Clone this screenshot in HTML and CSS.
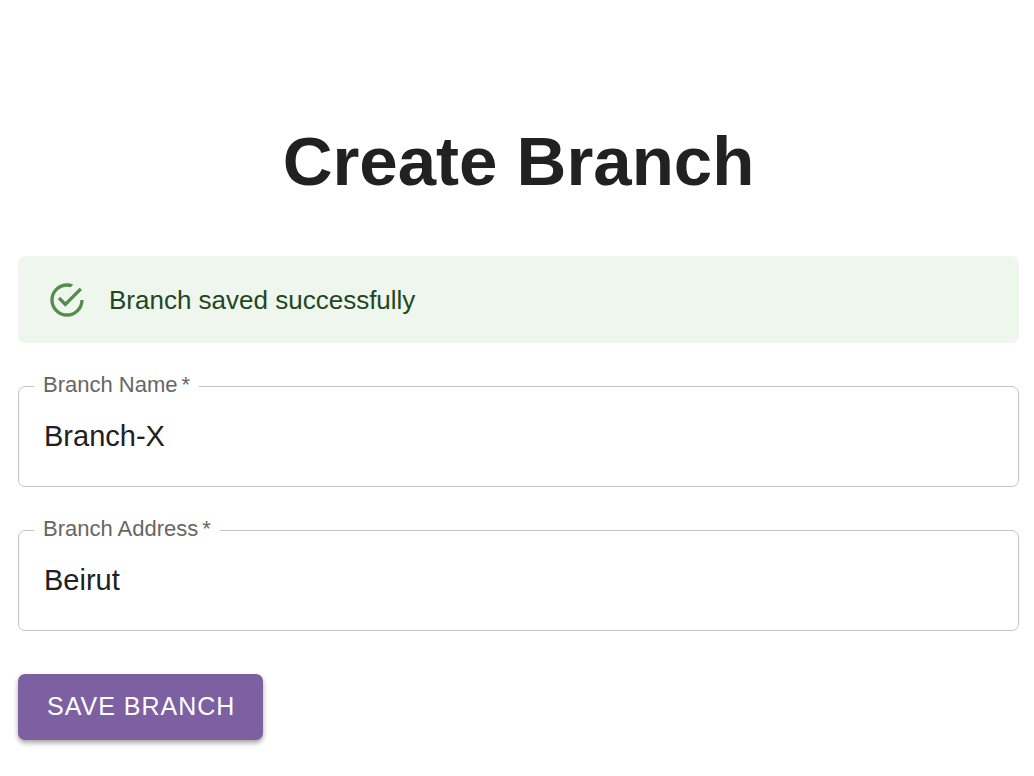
FILE: index.html
```html
<!DOCTYPE html>
<html lang="en">
<head>
<meta charset="utf-8">
<meta name="viewport" content="width=device-width, initial-scale=1">
<title>Create Branch</title>
<link rel="stylesheet" href="styles.css">
</head>
<body>
<main class="page">
  <h1 class="title">Create Branch</h1>
  <div class="alert" role="status">
    <svg class="alert-icon" viewBox="0 0 24 24" aria-hidden="true"><path d="M20,12A8,8 0 0,1 12,20A8,8 0 0,1 4,12A8,8 0 0,1 12,4C12.76,4 13.5,4.11 14.2,4.31L15.77,2.74C14.61,2.26 13.34,2 12,2A10,10 0 0,0 2,12A10,10 0 0,0 12,22A10,10 0 0,0 22,12M7.91,10.08L6.5,11.5L11,16L21,6L19.59,4.58L11,13.17L7.91,10.08Z"/></svg>
    <p class="alert-text">Branch saved successfully</p>
  </div>
  <form class="form">
    <div class="field">
      <label class="label" for="name">Branch Name<span class="star">*</span></label>
      <input class="input" id="name" type="text" value="Branch-X" required>
    </div>
    <div class="field">
      <label class="label" for="address">Branch Address<span class="star">*</span></label>
      <input class="input" id="address" type="text" value="Beirut" required>
    </div>
    <button class="save" type="button">SAVE BRANCH</button>
  </form>
</main>
</body>
</html>
```
FILE: styles.css
```css
* {
  box-sizing: border-box;
}

body {
  margin: 0;
  background: #fff;
  color: #212121;
  font-family: "Liberation Sans", Arial, sans-serif;
}

.page {
  padding: 122px 15px 36px 18px;
}

.title {
  margin: 0 0 54px;
  font-size: 69px;
  line-height: 80px;
  text-align: center;
}

.alert {
  display: flex;
  align-items: center;
  gap: 22px;
  min-height: 87px;
  margin-bottom: 43px;
  padding: 16px 29px;
  border-radius: 7px;
  background: #eff6ee;
  color: #234622;
}

.alert-icon {
  width: 40px;
  height: 40px;
  flex: none;
  fill: #548c4e;
}

.alert-text {
  margin: 0;
  font-size: 26px;
  line-height: 36px;
}

.form {
  display: flex;
  flex-direction: column;
  align-items: flex-start;
  gap: 43px;
}

.field {
  position: relative;
  width: 100%;
}

.label {
  position: absolute;
  top: -13px;
  left: 16px;
  padding: 0 9px;
  background: #fff;
  color: #666;
  font-size: 22px;
  line-height: 24px;
}

.star {
  margin-left: 4px;
}

.input {
  display: block;
  width: 100%;
  height: 101px;
  padding: 0 25px;
  border: 1px solid #c4c4c4;
  border-radius: 7px;
  background: #fff;
  color: #212121;
  font-family: inherit;
  font-size: 29px;
}

.save {
  padding: 13px 28px 15px 29px;
  border: 0;
  border-radius: 7px;
  background: #7c60a2;
  box-shadow: 0 3px 5px rgba(0, 0, 0, 0.35);
  color: #fff;
  font-family: inherit;
  font-size: 25px;
  line-height: 38px;
  letter-spacing: 1px;
}
```
